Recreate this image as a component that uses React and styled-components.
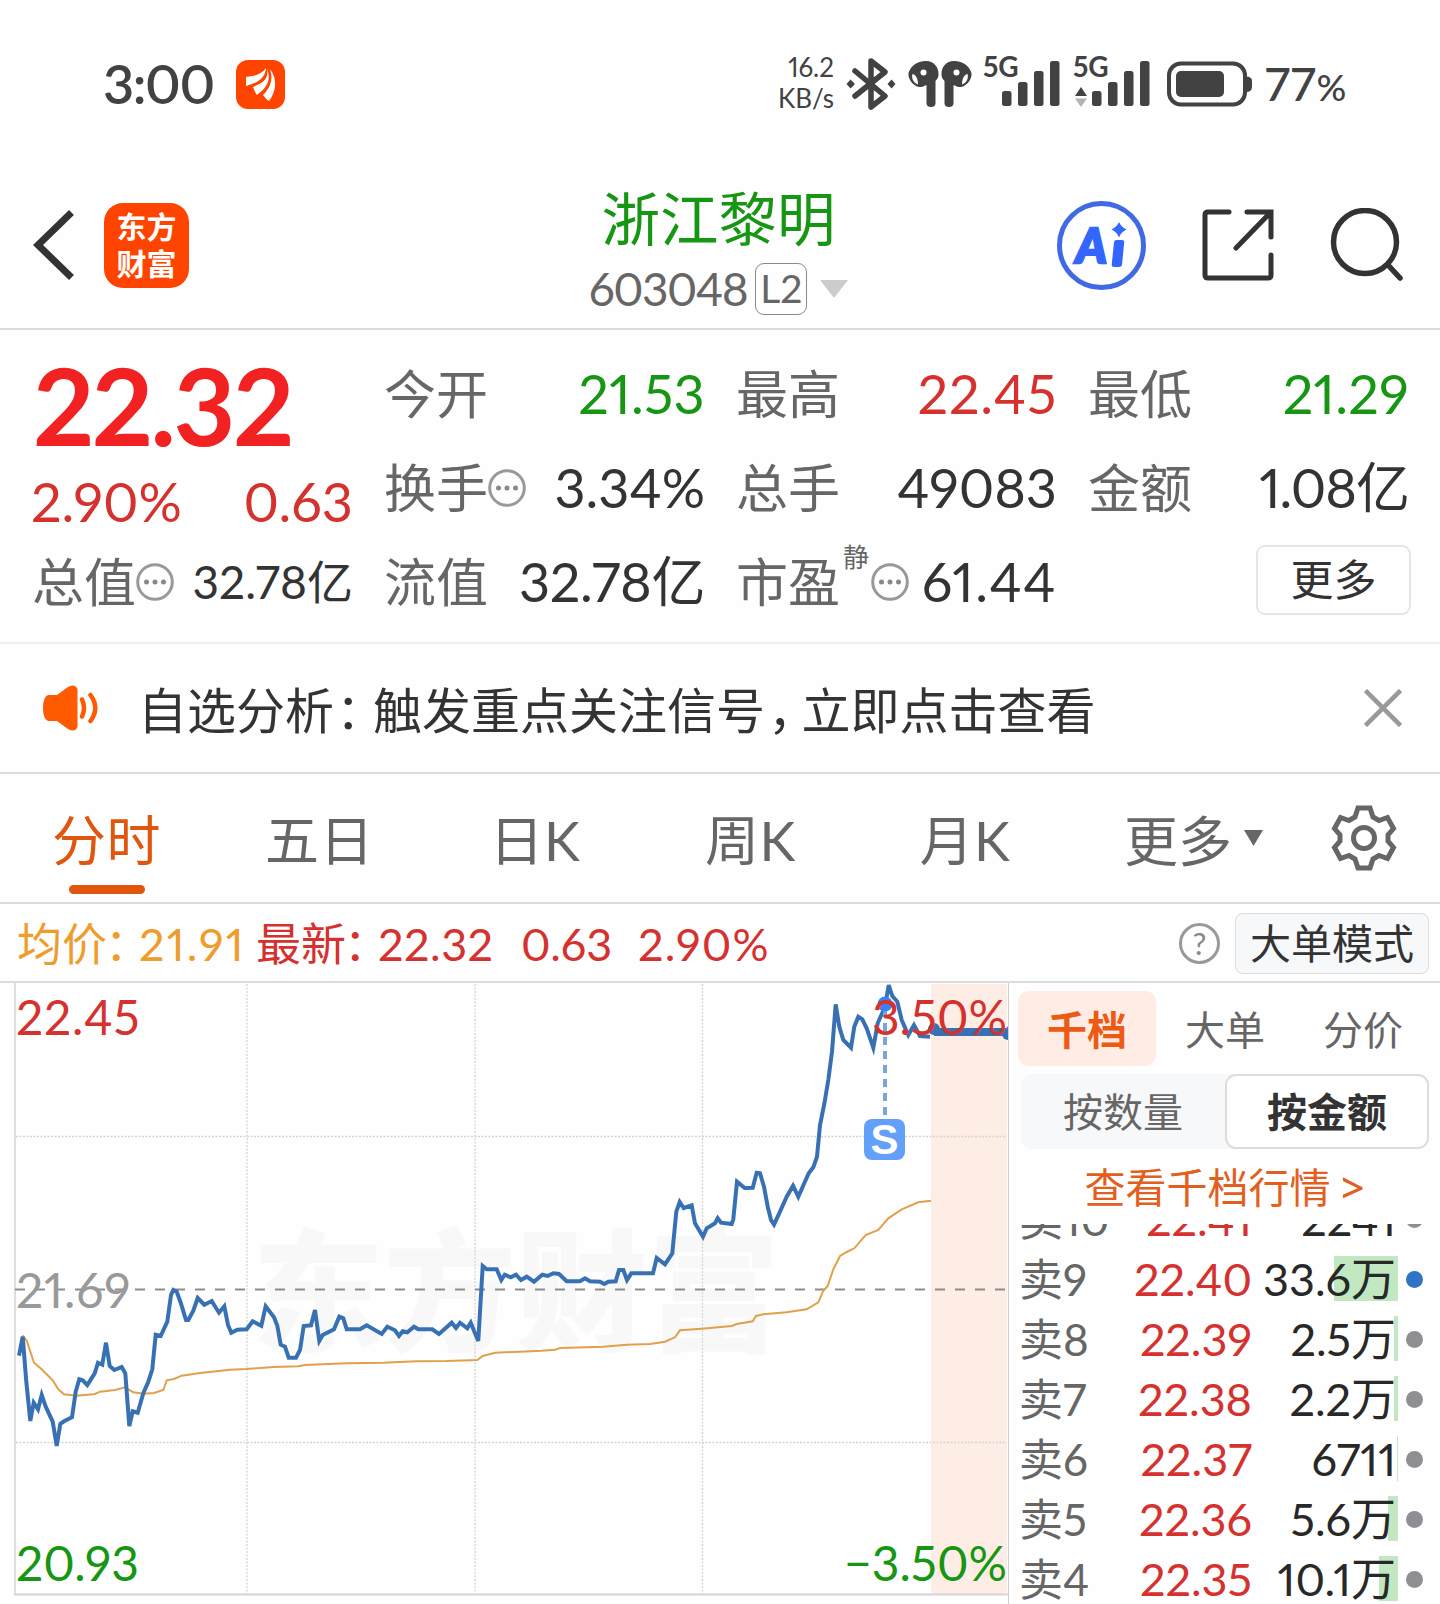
import styled, { createGlobalStyle } from "styled-components";

const GlobalStyle = createGlobalStyle`
  * {
    box-sizing: border-box;
  }

  body {
    margin: 0;
    background: #fefefe;
    color: #333;
    font-family: Lato, "Noto Sans CJK SC", sans-serif;
    font-feature-settings: "pnum";
    overflow: hidden;
  }

  button {
    font: inherit;
    color: inherit;
    padding: 0;
    border: 0;
    background: none;
  }

  svg {
    display: block;
    flex: none;
  }
`;

// data
const red = "#d5322f";
const green = "#169613";

const periods = [
  { label: "分时", width: 213, active: true },
  { label: "五日", width: 213 },
  { label: "日K", width: 218 },
  { label: "周K", width: 213 },
  { label: "月K", width: 216 },
];

const asks = [
  { level: "卖10", price: "22.41", volume: "2241", bar: 0 },
  { level: "卖9", price: "22.40", volume: "33.6万", bar: 64, active: true },
  { level: "卖8", price: "22.39", volume: "2.5万", bar: 4 },
  { level: "卖7", price: "22.38", volume: "2.2万", bar: 4 },
  { level: "卖6", price: "22.37", volume: "6711", bar: 1 },
  { level: "卖5", price: "22.36", volume: "5.6万", bar: 10 },
  { level: "卖4", price: "22.35", volume: "10.1万", bar: 19 },
];

// chart points are kept in thirds of a pixel, one block per part of the session
const toPoints = (list, left, top) =>
  list.map(([x, y]) => `${(left + x / 3).toFixed(1)},${(top + y / 3).toFixed(1)}`).join(" ");

const priceMorning = [
  [57, 467], [68, 410], [79, 545], [91, 663], [101, 608], [114, 628], [125, 585], [137, 620], [158, 665], [170, 738],
  [181, 672], [192, 664], [216, 652], [227, 575], [238, 538], [248, 541], [262, 555], [284, 520], [294, 488],
  [307, 494], [318, 428], [329, 498], [343, 510], [365, 501], [376, 520], [388, 678], [398, 634], [413, 638],
  [430, 580], [445, 545], [457, 508], [467, 404], [482, 408], [502, 365], [513, 285], [520, 270], [530, 275],
  [542, 308], [558, 360], [565, 360], [580, 332], [593, 294], [613, 314], [635, 303], [657, 338], [673, 319],
  [684, 375], [694, 398], [712, 389], [740, 388], [758, 364], [784, 377], [797, 319], [822, 352], [832, 377],
  [842, 434], [855, 440], [866, 473], [888, 473], [900, 450], [911, 378], [933, 376], [945, 330], [958, 423],
  [968, 405], [1002, 388], [1018, 350], [1030, 355], [1040, 388], [1080, 388], [1100, 376], [1145, 402],
  [1162, 380], [1185, 391], [1197, 408], [1208, 394], [1222, 397], [1242, 380], [1255, 388], [1297, 388],
  [1317, 402], [1355, 368], [1368, 384], [1380, 368], [1402, 385], [1412, 368], [1425, 400], [1435, 423],
];

const priceNoon = [
  [38, 378], [50, 388], [80, 388], [94, 420], [104, 404], [122, 412], [138, 404], [153, 420], [170, 410],
  [192, 425], [217, 404], [233, 408], [250, 400], [267, 402], [290, 424], [330, 424], [345, 415], [360, 424],
  [390, 425], [403, 432], [415, 425], [437, 424], [447, 390], [460, 390], [471, 420], [484, 400], [549, 400],
  [560, 354], [585, 373], [607, 340], [619, 215], [629, 186], [641, 204], [665, 196], [675, 250], [699, 290],
  [710, 265], [735, 250], [743, 235], [753, 248], [785, 252], [790, 238], [801, 125], [824, 144], [848, 143],
  [860, 98], [870, 100], [882, 140], [893, 200], [903, 240], [912, 254], [930, 215], [950, 170], [969, 137],
];

const priceClose = [
  [55, 710], [86, 640], [100, 622], [111, 590], [120, 495], [133, 432], [145, 360], [156, 275], [167, 133],
  [178, 200], [190, 240], [213, 263], [223, 200], [235, 170], [247, 178], [260, 205], [280, 263], [293, 190],
  [315, 140], [326, 75], [337, 108], [352, 125], [365, 180], [385, 225], [402, 195], [420, 228], [450, 230],
];

const averageMorning = [
  [68, 406], [80, 422], [102, 488], [125, 508], [158, 541], [175, 568], [192, 583], [230, 587], [285, 582],
  [300, 575], [345, 570], [375, 562], [400, 577], [430, 581], [462, 579], [490, 570], [500, 541], [522, 537],
  [545, 527], [600, 519], [690, 509], [740, 507], [820, 501], [895, 499], [915, 495], [1040, 490], [1150, 488],
  [1250, 484], [1340, 483], [1432, 480],
];

const averageNoon = [
  [38, 648], [75, 638], [215, 632], [255, 629], [270, 624], [400, 620], [470, 614], [540, 612], [585, 605],
  [615, 592], [630, 571], [695, 566], [785, 558], [800, 552], [848, 544], [858, 528], [880, 523], [950, 517],
  [1010, 508], [1045, 487], [1060, 452], [1073, 438], [1090, 388], [1110, 348], [1130, 336], [1153, 325],
  [1187, 285], [1225, 270], [1255, 235], [1295, 208], [1345, 187], [1383, 182],
];

const priceLine = [
  toPoints(priceMorning, 0, 217),
  toPoints(priceNoon, 470, 157),
  toPoints(priceClose, 780, -23),
].join(" ");

const averageLine = [toPoints(averageMorning, 0, 217), toPoints(averageNoon, 470, 157)].join(" ");

// icons
function FlameIcon() {
  return (
    <svg width="49" height="49" viewBox="0 0 49 49">
      <rect width="49" height="49" rx="12" fill="#ff4400" />
      <g fill="#fff">
        <path d="M10 17C19 16 26 14 30 8C29 19 21 23 10 26Z" />
        <path d="M31 9C33 20 26 23 17 27C18 30 19 32 21 35C32 27 35 19 31 9Z" />
        <path d="M34 9C38 21 33 29 27 35C29 38 31 40 33 41C40 32 42 19 34 9Z" />
      </g>
    </svg>
  );
}

function BluetoothIcon() {
  return (
    <svg width="50" height="54" viewBox="0 0 50 54" fill="none" stroke="#424242" strokeWidth="5.5">
      <path d="M9 14L39 39L25 50V4L39 15L9 39" strokeLinejoin="round" strokeLinecap="round" />
      <path d="M4.5 22.500L9 27L4.500 31.500L0.500 27ZM45.500 22.500L49.500 27L45.500 31.500L41.500 27Z" fill="#424242" stroke="none" />
    </svg>
  );
}

function EarbudsIcon() {
  return (
    <svg width="64" height="46" viewBox="0 0 64 46">
      <g id="bud">
        <path
          d="M18 0C26 0 30.500 6 30.500 13C30.500 17 29 18 27.500 20V42Q27.500 46 23 46Q18.500 46 18.500 42V24C15 26 11 27 8 25C3 22 0 17 0.500 12C3 4 10 0 18 0Z"
          fill="#424242"
        />
        <circle cx="15.500" cy="11.500" r="3" fill="#fff" />
        <path d="M4.500 13C3 18 6 22 10 23.500C10 20 9 14 4.500 13Z" fill="#fff" />
      </g>
      <use href="#bud" transform="translate(64 0) scale(-1 1)" />
    </svg>
  );
}

function SignalIcon({ data }) {
  return (
    <svg width="76" height="46" viewBox="0 0 76 46" fill="#424242">
      <rect x="18" y="30" width="9.500" height="15" rx="2.500" />
      <rect x="34" y="21" width="9.500" height="24" rx="2.500" />
      <rect x="50" y="10" width="9.500" height="35" rx="2.500" />
      <rect x="66" y="0" width="9.500" height="45" rx="2.500" />
      {data && (
        <>
          <path d="M1 35L7 26L13 35Z" />
          <path d="M1 37.500L7 46L13 37.500Z" fill="#b4b4b4" />
        </>
      )}
    </svg>
  );
}

function BatteryIcon() {
  return (
    <svg width="86" height="46" viewBox="0 0 86 46">
      <rect x="2" y="2.500" width="76" height="41" rx="12" fill="none" stroke="#424242" strokeWidth="4" />
      <rect x="9" y="10" width="48" height="26" rx="5" fill="#424242" />
      <path d="M79 15.500Q85 15.500 85 20V26Q85 31 79 31Z" fill="#424242" />
    </svg>
  );
}

function BackIcon() {
  return (
    <svg width="42" height="70" viewBox="0 0 42 70" fill="none" stroke="#333" strokeWidth="7">
      <path d="M38.500 2.500L5 35L38.500 67.500" />
    </svg>
  );
}

function ShareIcon() {
  return (
    <svg width="72" height="72" viewBox="0 0 72 72" fill="none" stroke="#333" strokeWidth="5" strokeLinecap="round">
      <path d="M27 3H6Q3 3 3 6V66Q3 69 6 69H66Q69 69 69 66V46" />
      <path d="M45 3H69V28M68 4L34 39" />
    </svg>
  );
}

function SearchIcon() {
  return (
    <svg width="74" height="74" viewBox="0 0 74 74" fill="none" stroke="#333" strokeWidth="5.500" strokeLinecap="round">
      <circle cx="35" cy="34" r="31.500" />
      <path d="M58 57L70 70" />
    </svg>
  );
}

function MoreDots() {
  return (
    <svg width="38" height="38" viewBox="0 0 38 38">
      <circle cx="19" cy="19" r="17.300" fill="none" stroke="#999" strokeWidth="3" />
      <g fill="#888">
        <circle cx="10.500" cy="19" r="2.500" />
        <circle cx="19" cy="19" r="2.500" />
        <circle cx="27.500" cy="19" r="2.500" />
      </g>
    </svg>
  );
}

function SpeakerIcon() {
  return (
    <svg width="56" height="46" viewBox="0 0 56 46">
      <path
        d="M5 10H14L25 2Q32 -2 34.500 4V42Q32 48 25 44L14 36H5Q0 34 0 23Q0 12 5 10Z"
        fill="#ff5a00"
      />
      <path d="M39 14.500Q43 23 39 31.500M47.500 10Q57 23 47.500 36" fill="none" stroke="#ff5a00" strokeWidth="4.500" strokeLinecap="round" />
    </svg>
  );
}

function CloseIcon() {
  return (
    <svg width="38" height="38" viewBox="0 0 38 38" stroke="#999" strokeWidth="4.500">
      <path d="M1.500 1.500L36.500 36.500M36.500 1.500L1.500 36.500" />
    </svg>
  );
}

function GearIcon() {
  return (
    <svg width="66" height="66" viewBox="0 0 66 66" fill="none" stroke="#666" strokeWidth="5">
      <path d="M27 3H39L42 12L48 15.500L56.500 12.500L62.500 23.500L57 30V36L62.500 42.500L56.500 53.500L48 50.500L42 54L39 63H27L24 54L18 50.500L9.500 53.500L3.500 42.500L9 36V30L3.500 23.500L9.500 12.500L18 15.500L24 12Z" />
      <circle cx="33" cy="33" r="10.500" />
    </svg>
  );
}

function Caret({ width, height, color }) {
  return (
    <svg width={width} height={height} viewBox="0 0 20 14" preserveAspectRatio="none">
      <path d="M0 0H20L10 14Z" fill={color} />
    </svg>
  );
}

function PriceChart() {
  return (
    <svg width="1009" height="621" viewBox="0 0 1009 621">
      <text x="252" y="358" fontSize="132" fontWeight="900" fill="#f8f8f9">
        东方财富
      </text>
      <rect x="931" y="1" width="76" height="611" fill="#feede5" />
      <g stroke="#d4d4d4" strokeWidth="1.300" strokeDasharray="2 1.500">
        <path d="M247 1V611M475 1V611M702.500 1V611" />
        <path d="M16 153.500H1007M16 459.500H1007" />
      </g>
      <path d="M15 0V612" stroke="#dedede" strokeWidth="2" />
      <path d="M14 611.500H1008" stroke="#d6d6d6" strokeWidth="2" />
      <path d="M15 306.500H1007" stroke="#8c8c8c" strokeWidth="2" strokeDasharray="10 10" />
      <polyline points={averageLine} fill="none" stroke="#e0a04c" strokeWidth="2" />
      <polyline points={priceLine} fill="none" stroke="#3871b3" strokeWidth="4" />
      <circle cx="934" cy="46" r="6" fill="#3871b3" />
      <path d="M934 49H1006" stroke="#3871b3" strokeWidth="8" />
      <path d="M1008 43V57A6 6 0 0 1 1002 51Z" fill="#3871b3" />
      <path d="M885 26V134" stroke="#78a5dc" strokeWidth="4" strokeDasharray="8 6" />
      <circle cx="885" cy="21" r="7.500" fill="#3d7ff5" />
      <rect x="864" y="136" width="41" height="41" rx="8" fill="#62a0fa" />
    </svg>
  );
}

// page
export default function App() {
  return (
    <Page>
      <GlobalStyle />

      <StatusBar>
        <Clock>3:00</Clock>
        <FlameIcon />
        <StatusIcons>
          <NetSpeed>
            <span>16.2</span>
            <span>KB/s</span>
          </NetSpeed>
          <BluetoothIcon />
          <EarbudsIcon />
          <Signal>
            <SignalIcon />
            <span>5G</span>
          </Signal>
          <Signal>
            <SignalIcon data />
            <span>5G</span>
          </Signal>
          <Battery>
            <BatteryIcon />
            <span>
              77<small>%</small>
            </span>
          </Battery>
        </StatusIcons>
      </StatusBar>

      <Header>
        <HeaderSide>
          <BackIcon />
          <Logo>
            <span>东方</span>
            <span>财富</span>
          </Logo>
        </HeaderSide>
        <Title>
          <h1>浙江黎明</h1>
          <Code>
            <span>603048</span>
            <Level>L2</Level>
            <Caret width={28} height={18} color="#ccc" />
          </Code>
        </Title>
        <Actions>
          <AiButton>
            <span>A</span>
            <svg width="18" height="46" viewBox="0 0 18 46" fill="#3366ff">
              <path d="M5 20Q5.200 18 7.500 18H13Q15.500 18 15.200 20L13 43Q12.500 45 10 45H5Q2.500 45 2.700 43Z" />
              <path d="M10 0Q12 5 17.500 7.500Q12 10 10 15.500Q8 10 2.500 7.500Q8 5 10 0Z" />
            </svg>
          </AiButton>
          <ShareIcon />
          <SearchIcon />
        </Actions>
      </Header>

      <Quotes>
        <Headline>
          <Price>22.32</Price>
          <Change>
            <span>2.90%</span>
            <span>0.63</span>
          </Change>
        </Headline>
        <Quote $color={green} $spacing={0.3}>
          <dt>今开</dt>
          <dd>21.53</dd>
        </Quote>
        <Quote $color={red} $spacing={0.8}>
          <dt>最高</dt>
          <dd>22.45</dd>
        </Quote>
        <Quote $color={green} $spacing={0.3}>
          <dt>最低</dt>
          <dd>21.29</dd>
        </Quote>
        <Quote>
          <dt>
            换手
            <MoreDots />
          </dt>
          <dd>3.34%</dd>
        </Quote>
        <Quote>
          <dt>总手</dt>
          <dd>49083</dd>
        </Quote>
        <Quote $spacing={-1}>
          <dt>金额</dt>
          <dd>1.08亿</dd>
        </Quote>
        <Quote $small>
          <dt>
            总值
            <MoreDots />
          </dt>
          <dd>32.78亿</dd>
        </Quote>
        <Quote $spacing={-0.4}>
          <dt>流值</dt>
          <dd>32.78亿</dd>
        </Quote>
        <Quote $spacing={1.5}>
          <dt>
            市盈
            <sup>静</sup>
            <MoreDots />
          </dt>
          <dd>61.44</dd>
        </Quote>
        <MoreButton>更多</MoreButton>
      </Quotes>

      <Notice>
        <SpeakerIcon />
        <p>
          自选分析<Mark $before={2} $after={12.5}>：</Mark>触发重点关注信号<Mark $before={3} $after={9}>，</Mark>立即点击查看
        </p>
        <CloseIcon />
      </Notice>

      <Periods>
        {periods.map((period) => (
          <Period key={period.label} $width={period.width} $active={period.active}>
            <span>{period.label}</span>
          </Period>
        ))}
        <MorePeriods>
          更多
          <Caret width={19} height={16} color="#666" />
        </MorePeriods>
        <GearIcon />
      </Periods>

      <Summary>
        <Figure $color="#ee9c2c" $width={239} $spacing={2.2}>
          均价<Mark $before={-2} $after={11.5}>：</Mark>
          <b>21.91</b>
        </Figure>
        <Figure $color={red} $width={265} $spacing={0.5}>
          最新<Mark $before={-2} $after={11.5}>：</Mark>
          <b>22.32</b>
        </Figure>
        <Figure $color={red} $width={117}>
          <b>0.63</b>
        </Figure>
        <Figure $color={red} $spacing={1.2}>
          <b>2.90%</b>
        </Figure>
        <Help>?</Help>
        <ModeButton>大单模式</ModeButton>
      </Summary>

      <Main>
        <ChartPane>
          <PriceChart />
          <AxisLabel $top={9} $left={16} $color={red} $spacing={0.8}>
            22.45
          </AxisLabel>
          <AxisLabel $top={9} $right={1} $color={red}>
            3.50%
          </AxisLabel>
          <AxisLabel $top={282} $left={16} $color="#999" $spacing={0.9}>
            21.69
          </AxisLabel>
          <AxisLabel $top={555} $left={16} $color={green}>
            20.93
          </AxisLabel>
          <AxisLabel $top={555} $right={1} $color={green}>
            −3.50%
          </AxisLabel>
          <SellMark>S</SellMark>
        </ChartPane>

        <Book>
          <BookTabs>
            <BookTab $active>千档</BookTab>
            <BookTab>大单</BookTab>
            <BookTab>分价</BookTab>
          </BookTabs>
          <Segments>
            <Segment>按数量</Segment>
            <Segment $active>按金额</Segment>
          </Segments>
          <DepthLink>
            查看千档行情 <b>&gt;</b>
          </DepthLink>
          <AskList>
            {asks.map((ask) => (
              <Ask key={ask.level}>
                <AskLevel>{ask.level}</AskLevel>
                <AskPrice>{ask.price}</AskPrice>
                <AskVolume>
                  <VolumeBar style={{ width: ask.bar }} />
                  <span>{ask.volume}</span>
                </AskVolume>
                <Dot $active={ask.active} />
              </Ask>
            ))}
          </AskList>
        </Book>
      </Main>
    </Page>
  );
}

const Page = styled.div`
  width: 1440px;
  height: 1604px;
  display: flex;
  flex-direction: column;
  overflow: hidden;
`;

const StatusBar = styled.div`
  height: 160px;
  padding: 8px 91px 0 103px;
  display: flex;
  align-items: center;
  color: #424242;
`;

const Clock = styled.div`
  width: 133px;
  font-size: 54px;
  font-weight: 600;
  letter-spacing: -1.4px;
  line-height: 60px;
`;

const StatusIcons = styled.div`
  margin-left: auto;
  display: flex;
  align-items: center;
  gap: 12px;
`;

const NetSpeed = styled.div`
  padding-bottom: 2px;
  display: flex;
  flex-direction: column;
  align-items: flex-end;
  font-size: 26px;
  line-height: 31px;
`;

const Signal = styled.div`
  position: relative;

  span {
    position: absolute;
    top: -10px;
    left: -1px;
    font-size: 28px;
    font-weight: 700;
    line-height: 31px;
  }

  & + & {
    margin-left: 2px;
  }
`;

const Battery = styled.div`
  margin-left: 5px;
  display: flex;
  align-items: center;
  gap: 12px;
  font-size: 47px;
  font-weight: 500;
  letter-spacing: 0.8px;
  line-height: 50px;

  span {
    width: 86px;
    margin-right: -2px;
    padding-top: 2px;
    white-space: nowrap;
  }

  small {
    font-size: 37px;
  }
`;

const Header = styled.header`
  height: 170px;
  padding: 2px 36px 0 33px;
  display: grid;
  grid-template-columns: 380px 1fr 380px;
  align-items: center;
  border-bottom: 2px solid #dcdcdc;
`;

const HeaderSide = styled.div`
  display: flex;
  align-items: center;
  gap: 29px;
`;

const Logo = styled.div`
  width: 85px;
  height: 85px;
  padding-top: 5px;
  display: flex;
  flex-direction: column;
  align-items: center;
  border-radius: 19px;
  background: #ff4400;
  color: #fff;
  font-size: 30px;
  font-weight: 700;
  line-height: 37px;
`;

const Title = styled.div`
  padding-top: 12px;
  display: flex;
  flex-direction: column;
  align-items: center;

  h1 {
    margin: 0;
    color: ${green};
    font-size: 58.500px;
    font-weight: 400;
    line-height: 76px;
  }
`;

const Code = styled.div`
  display: flex;
  align-items: center;
  gap: 9px;
  color: #666;
  font-size: 46px;
  line-height: 66px;

  span:first-child {
    margin-right: -1px;
    letter-spacing: -1.500px;
  }

  svg {
    margin-left: 4px;
  }
`;

const Level = styled.span`
  width: 52px;
  height: 52px;
  border: 1.5px solid #8a8a8a;
  border-radius: 9px;
  font-size: 39px;
  line-height: 48px;
  text-align: center;
`;

const Actions = styled.div`
  display: flex;
  align-items: center;
  justify-content: flex-end;
  gap: 56px;
`;

const AiButton = styled.button`
  width: 89px;
  height: 89px;
  display: flex;
  align-items: center;
  justify-content: center;
  gap: 2px;
  border: 5px solid #4169e4;
  border-radius: 50%;
  color: #3366ff;
  font-size: 47px;
  font-weight: 900;
  font-style: italic;
  line-height: 56px;
  -webkit-text-stroke: 2.500px #3366ff;
`;

const Quotes = styled.dl`
  height: 312px;
  margin: 0;
  padding: 17px 34px 0 33px;
  display: grid;
  grid-template-columns: repeat(4, 317px);
  grid-template-rows: repeat(3, 94px);
  column-gap: 35px;
`;

const Headline = styled.div`
  grid-row: span 2;
  color: ${red};
`;

const Price = styled.div`
  height: 116px;
  color: #f32222;
  font-size: 107px;
  font-weight: 700;
  letter-spacing: -2.500px;
  line-height: 116px;
`;

const Change = styled.div`
  margin: 0 -3px 0 -2px;
  padding-top: 1px;
  display: flex;
  justify-content: space-between;
  font-size: 54px;
  line-height: 76px;
`;

const Quote = styled.div`
  display: flex;
  align-items: center;
  justify-content: space-between;
  font-size: 53px;
  line-height: 92px;
  white-space: nowrap;

  dt {
    display: flex;
    align-items: center;
    margin-left: -1px;
    color: #666;
    font-size: 52px;
  }

  sup {
    margin: -50px 2px 0 3px;
    font-size: 26px;
    line-height: 30px;
  }

  dd {
    margin: 0 -3px 0 0;
    color: ${({ $color }) => $color || "#333"};
    font-size: ${({ $small }) => ($small ? 46 : 54)}px;
    letter-spacing: ${({ $spacing }) => $spacing || 0}px;
  }
`;

const MoreButton = styled.button`
  justify-self: end;
  align-self: center;
  width: 155px;
  height: 70px;
  margin: -4px -5px 0 0;
  border: 2px solid #e6e6e6;
  border-radius: 9px;
  font-size: 43px;
  line-height: 64px;
`;

const Notice = styled.div`
  height: 132px;
  padding: 0 38px 0 43px;
  display: flex;
  align-items: center;
  border-top: 2px solid #eee;
  border-bottom: 2px solid #dcdcdc;

  p {
    flex: 1;
    margin: 0 0 0 39px;
    padding-top: 3px;
    font-size: 49px;
    line-height: 70px;
    white-space: nowrap;
  }
`;

// full-width punctuation set on a half-width advance
const Mark = styled.span`
  margin: 0 ${({ $after }) => $after}px 0 ${({ $before }) => $before}px;
  font-feature-settings: "halt";
`;

const Periods = styled.nav`
  height: 130px;
  padding-right: 43px;
  display: flex;
  align-items: center;
  border-bottom: 2px solid #dcdcdc;
  color: #666;
  font-size: 54px;
`;

const Period = styled.button`
  position: relative;
  width: ${({ $width }) => $width}px;
  height: 128px;
  padding-top: 5px;
  color: ${({ $active }) => ($active ? "#e0560f" : "#666")};
  letter-spacing: 0.5px;
  text-align: center;
  line-height: 123px;

  &::after {
    content: "";
    display: ${({ $active }) => ($active ? "block" : "none")};
    position: absolute;
    left: 69px;
    bottom: 8px;
    width: 76px;
    height: 9px;
    border-radius: 5px;
    background: #e0560f;
  }
`;

const MorePeriods = styled.button`
  margin: 0 auto 0 51px;
  display: flex;
  align-items: center;
  gap: 12px;
`;

const Summary = styled.div`
  height: 79px;
  padding: 3px 11px 0 17px;
  display: flex;
  align-items: center;
  border-bottom: 2px solid #dcdcdc;
`;

const Figure = styled.div`
  width: ${({ $width }) => ($width ? `${$width}px` : "auto")};
  color: ${({ $color }) => $color};
  font-size: 45px;
  line-height: 74px;
  white-space: nowrap;

  b {
    font-weight: 400;
    letter-spacing: ${({ $spacing }) => $spacing || 0}px;
  }
`;

const Help = styled.span`
  width: 41px;
  height: 41px;
  margin: -2px 15px 0 auto;
  border: 3px solid #999;
  border-radius: 50%;
  color: #888;
  font-size: 31px;
  line-height: 34px;
  text-align: center;
`;

const ModeButton = styled.button`
  width: 194px;
  height: 61px;
  margin-top: -2px;
  padding-top: 2px;
  border: 1.5px solid #dcdcdc;
  border-radius: 8px;
  background: #f7f8fa;
  font-size: 41px;
  line-height: 56px;
`;

const Main = styled.main`
  flex: 1;
  min-height: 0;
  display: flex;
`;

const ChartPane = styled.section`
  position: relative;
  width: 1009px;
  border-right: 1px solid #d0d0d0;
`;

const AxisLabel = styled.span`
  position: absolute;
  top: ${({ $top }) => $top}px;
  left: ${({ $left }) => ($left === undefined ? "auto" : `${$left}px`)};
  right: ${({ $right }) => ($right === undefined ? "auto" : `${$right}px`)};
  color: ${({ $color }) => $color};
  font-size: 48px;
  letter-spacing: ${({ $spacing }) => $spacing || 0}px;
  line-height: 50px;
`;

const SellMark = styled.span`
  position: absolute;
  top: 136px;
  left: 864px;
  width: 41px;
  color: #fff;
  font-family: "Liberation Sans", sans-serif;
  font-size: 42px;
  font-weight: 700;
  line-height: 42px;
  text-align: center;
`;

const Book = styled.section`
  flex: 1;
  min-width: 0;
  display: flex;
  flex-direction: column;
`;

const BookTabs = styled.div`
  margin: 8px 0 0 9px;
  display: flex;
`;

const BookTab = styled.button`
  width: 138px;
  height: 75px;
  padding-top: 3px;
  border-radius: 11px;
  background: ${({ $active }) => ($active ? "#ffece4" : "none")};
  color: ${({ $active }) => ($active ? "#ec5a14" : "#666")};
  font-size: 40px;
  font-weight: ${({ $active }) => ($active ? 700 : 400)};
  line-height: 72px;
`;

const Segments = styled.div`
  height: 75px;
  margin: 8px 11px 0 12px;
  display: flex;
  border-radius: 11px;
  background: #f7f8fa;
`;

const Segment = styled.button`
  width: 204px;
  height: 75px;
  padding-top: 2px;
  border: 2px solid ${({ $active }) => ($active ? "#ddd" : "transparent")};
  border-radius: 11px;
  background: ${({ $active }) => ($active ? "#fff" : "none")};
  color: ${({ $active }) => ($active ? "#333" : "#666")};
  font-size: 40px;
  font-weight: ${({ $active }) => ($active ? 700 : 400)};
  line-height: 69px;
`;

const DepthLink = styled.button`
  height: 75px;
  padding-top: 2px;
  color: #e35f20;
  font-size: 41px;
  line-height: 73px;

  b {
    font-family: "Noto Sans", sans-serif;
    font-weight: 500;
    line-height: 1;
  }
`;

const AskList = styled.div`
  flex: 1;
  min-height: 0;
  display: flex;
  flex-direction: column;
  overflow: hidden;
`;

const Ask = styled.div`
  flex: none;
  height: 60px;
  padding: 0 17px 0 10px;
  display: grid;
  grid-template-columns: 90px 143px 146px 1fr;
  align-items: center;
  font-size: 45px;
  line-height: 60px;

  /* the list is scrolled part of a row down */
  &:first-child {
    margin-top: -35px;
  }
`;

const AskLevel = styled.span`
  color: #666;
  font-size: 44px;
  white-space: nowrap;
`;

const AskPrice = styled.span`
  color: ${red};
  text-align: right;
`;

const AskVolume = styled.span`
  position: relative;
  height: 60px;
  padding-right: 2px;
  color: #282828;
  text-align: right;
  white-space: nowrap;

  span {
    position: relative;
  }
`;

const VolumeBar = styled.i`
  position: absolute;
  top: 7px;
  right: 0;
  height: 45px;
  background: #c2e8c2;
`;

const Dot = styled.i`
  justify-self: end;
  width: 17px;
  height: 17px;
  border-radius: 50%;
  background: ${({ $active }) => ($active ? "#2f73c4" : "#8e8e93")};
`;
